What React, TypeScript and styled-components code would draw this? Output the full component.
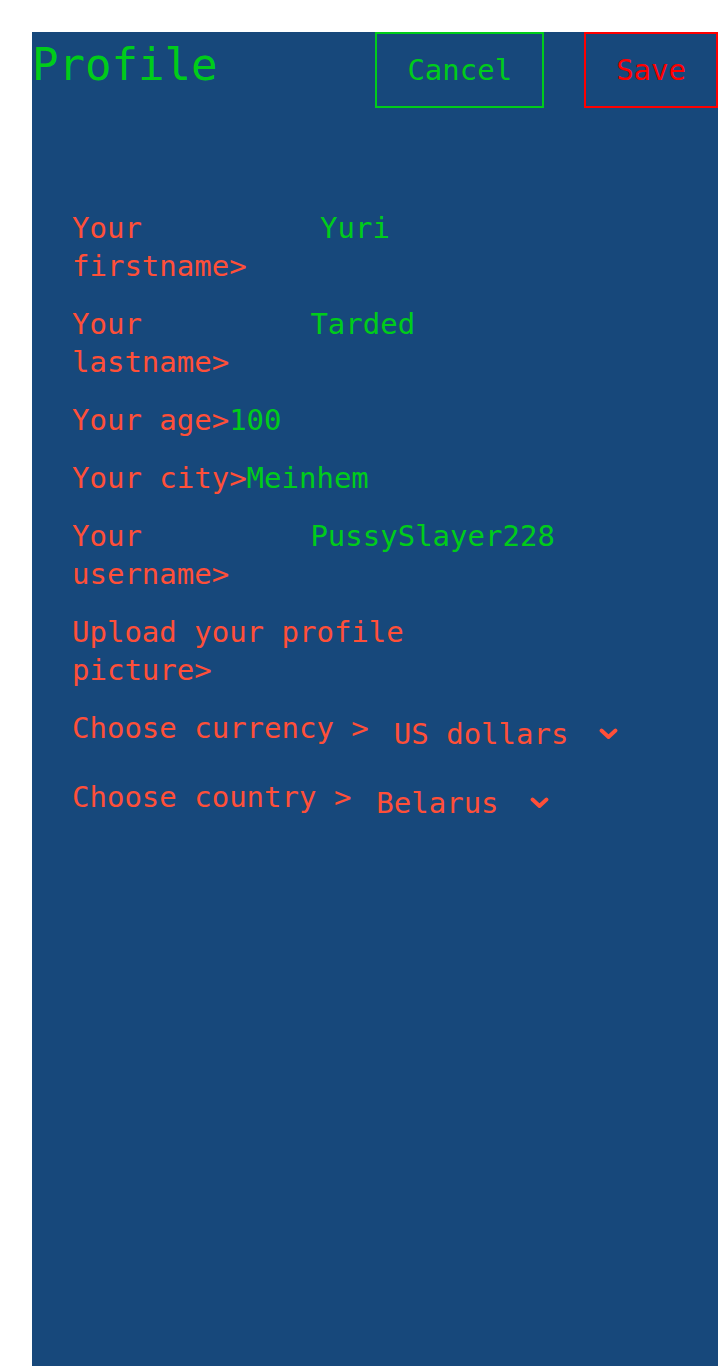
import React from "react";
import styled, { createGlobalStyle } from "styled-components";

const GlobalStyle = createGlobalStyle`
  html, body {
    margin: 0;
    padding: 0;
    background: #ffffff;
  }
  body {
    font-family: "DejaVu Sans Mono", "Liberation Mono", monospace;
  }
`;

const Page = styled.div`
  padding: 32px 0 0 32px;
  overflow: hidden;
`;

const Panel = styled.main`
  background: #17487b;
  min-height: calc(100vh - 32px);
  font-family: "DejaVu Sans Mono", "Liberation Mono", monospace;
`;

const Header = styled.header`
  display: flex;
  align-items: baseline;
  justify-content: space-between;
`;

const Title = styled.h1`
  margin: 0;
  font-size: 44px;
  font-weight: normal;
  color: #00cc1a;
`;

const Actions = styled.div`
  display: flex;
  align-items: baseline;
  gap: 40px;
`;

const ActionButton = styled.button<{ $tone: string }>`
  font-family: "DejaVu Sans Mono", "Liberation Mono", monospace;
  font-size: 29px;
  line-height: 34px;
  padding: 19px 30px;
  background: transparent;
  color: ${(p) => p.$tone};
  border: 2px solid ${(p) => p.$tone};
  cursor: pointer;
`;

const Form = styled.section`
  margin-top: 101px;
  padding-left: 40px;
  display: flex;
  flex-direction: column;
  gap: 20px;
`;

const Row = styled.div`
  display: flex;
  width: 570px;
  font-size: 29px;
  line-height: 38px;
`;

const Label = styled.span`
  flex: 0 1 auto;
  color: #ff4f38;
`;

const Value = styled.span`
  flex: 0 1 340px;
  color: #00cc1a;
`;

const SelectRow = styled.div`
  display: flex;
  align-items: flex-start;
  font-size: 29px;
  line-height: 38px;
`;

const Select = styled.div`
  display: inline-flex;
  align-items: center;
  height: 49px;
  padding-left: 25px;
  gap: 31px;
  color: #ff4f38;
  line-height: normal;
  cursor: pointer;
`;

const Chevron = () => (
  <svg width="19" height="12" viewBox="0 0 19 12" aria-hidden="true">
    <path
      d="M2.5 2.5 L9.5 9 L16.5 2.5"
      fill="none"
      stroke="#ff4f38"
      strokeWidth="3.8"
      strokeLinecap="round"
      strokeLinejoin="round"
    />
  </svg>
);

const fields: { label: string; value: string }[] = [
  { label: "Your firstname>", value: "Yuri" },
  { label: "Your lastname>", value: "Tarded" },
  { label: "Your age>", value: "100" },
  { label: "Your city>", value: "Meinhem" },
  { label: "Your username>", value: "PussySlayer228" },
  { label: "Upload your profile picture>", value: "" },
];

const selects: { label: string; value: string }[] = [
  { label: "Choose currency >", value: "US dollars" },
  { label: "Choose country >", value: "Belarus" },
];

export default function App() {
  return (
    <>
      <GlobalStyle />
      <Page>
        <Panel>
          <Header>
            <Title>Profile</Title>
            <Actions>
              <ActionButton $tone="#00cc1a">Cancel</ActionButton>
              <ActionButton $tone="#ff0000">Save</ActionButton>
            </Actions>
          </Header>
          <Form>
            {fields.map((f) => (
              <Row key={f.label}>
                <Label>{f.label}</Label>
                <Value>{f.value}</Value>
              </Row>
            ))}
            {selects.map((s) => (
              <SelectRow key={s.label}>
                <Label>{s.label}</Label>
                <Select>
                  <span>{s.value}</span>
                  <Chevron />
                </Select>
              </SelectRow>
            ))}
          </Form>
        </Panel>
      </Page>
    </>
  );
}
